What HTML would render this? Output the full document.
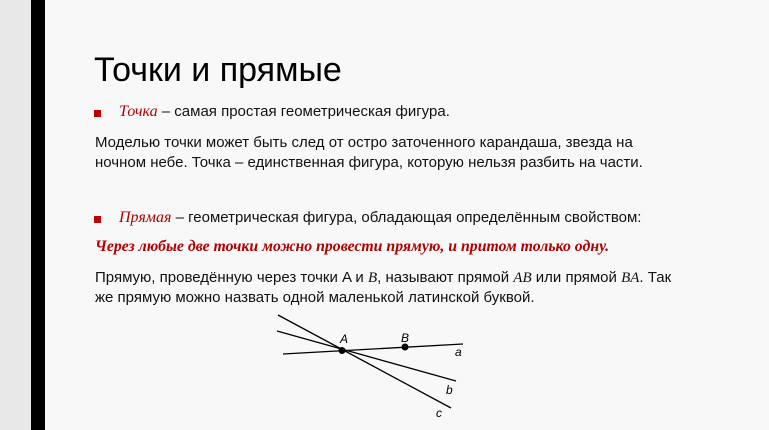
<!DOCTYPE html>
<html><head><meta charset="utf-8"><style>
html,body{margin:0;padding:0;width:769px;height:430px;overflow:hidden;background:#f8f8f8;font-family:"Liberation Sans","DejaVu Sans",sans-serif;color:#111;}
.strip{position:absolute;left:0;top:0;width:31px;height:430px;background:#e8e8e8;}
.bar{position:absolute;left:31px;top:0;width:14px;height:430px;background:#000;}
.t{position:absolute;white-space:nowrap;font-size:15px;}
.title{position:absolute;left:94px;top:51px;font-size:34px;color:#000;}
.bul{position:absolute;width:7px;height:7px;background:#c00000;}
.ser{font-family:"Liberation Serif",serif;font-style:italic;}
.red{color:#b00000;}
</style></head><body>
<div class="strip"></div><div class="bar"></div>
<div class="title">Точки и прямые</div>
<div class="bul" style="left:94px;top:110px"></div>
<div class="t" style="left:119px;top:103px"><span class="ser red" style="font-size:16px">Точка</span> – самая простая геометрическая фигура.</div>
<div class="t" style="left:95px;top:133px;line-height:20px">Моделью точки может быть след от остро заточенного карандаша, звезда на<br>ночном небе. Точка – единственная фигура, которую нельзя разбить на части.</div>
<div class="bul" style="left:94px;top:216px"></div>
<div class="t" style="left:119px;top:209px"><span class="ser red" style="font-size:16px">Прямая</span> – геометрическая фигура, обладающая определённым свойством:</div>
<div class="t ser red" style="left:95px;top:238px;font-weight:bold;font-size:15.8px">Через любые две точки можно провести прямую, и притом только одну.</div>
<div class="t" style="left:95px;top:268px;line-height:20px">Прямую, проведённую через точки A и <span class="ser">B</span>, называют прямой <span class="ser">AB</span> или прямой <span class="ser">BA</span>. Так<br>же прямую можно назвать одной маленькой латинской буквой.</div>
<svg style="position:absolute;left:0;top:0" width="769" height="430">
<g stroke="#000" stroke-width="1.3">
<line x1="283" y1="354" x2="463" y2="344"/>
<line x1="277" y1="331" x2="456" y2="381"/>
<line x1="278" y1="315" x2="451" y2="408"/>
</g>
<circle cx="342" cy="350.5" r="3.5"/><circle cx="405" cy="347" r="3.5"/>
<g font-family="Liberation Sans,sans-serif" font-style="italic" font-size="12" fill="#000">
<text x="340" y="343">A</text><text x="401" y="342">B</text>
<text x="455" y="356">a</text><text x="446" y="394">b</text><text x="436" y="417">c</text>
</g>
</svg>
</body></html>
